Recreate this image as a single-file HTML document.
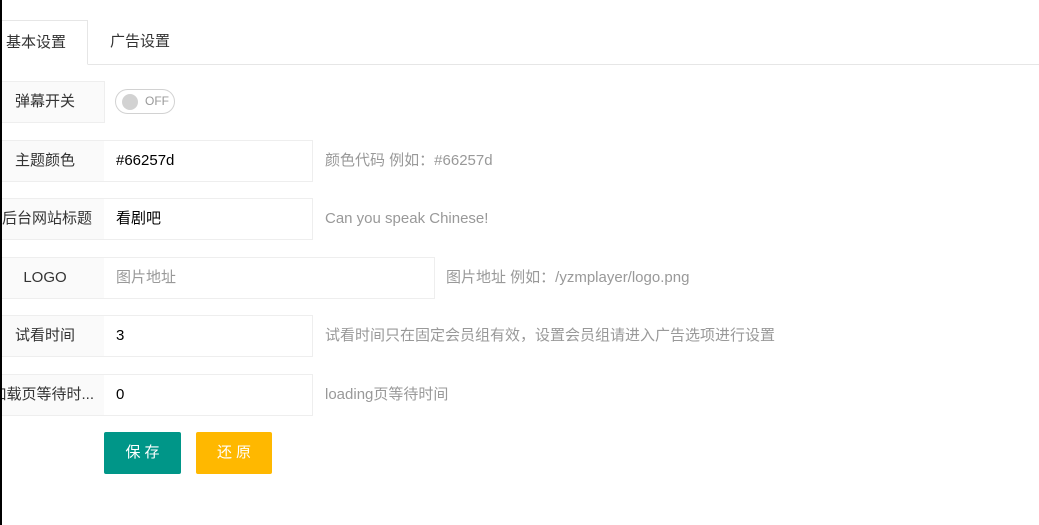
<!DOCTYPE html>
<html><head><meta charset="utf-8"><style>
*{box-sizing:border-box;margin:0;padding:0}
body{width:1039px;height:525px;background:#fff;position:relative;overflow:hidden;font-family:"Liberation Sans","Noto Sans CJK SC",sans-serif;font-size:15px;color:#333}
.lb{position:absolute;left:0;width:2px;top:0;height:525px;background:#000;z-index:5}
.tabline{position:absolute;left:0;top:64px;width:1039px;height:1px;background:#e6e6e6}
.tab1{position:absolute;left:-10px;top:20px;width:98px;height:45px;background:#fff;border:1px solid #e6e6e6;border-bottom-color:#fff;padding-left:15px;line-height:43px;color:#333}
.tab2{position:absolute;left:110px;top:20px;line-height:43px}
.label{position:absolute;left:-15px;width:120px;height:42px;background:#fafafa;border:1px solid #eee;line-height:40px;text-align:center;white-space:nowrap;overflow:hidden;text-overflow:ellipsis;padding:0 4px}
.inp{position:absolute;left:104px;height:42px;border:1px solid #eee;border-left:none;background:#fff;line-height:40px;padding-left:12px;color:#000;width:209px}
.aux{position:absolute;line-height:42px;color:#999}
.sw{position:absolute;left:115px;top:89px;width:60px;height:25px;border:1px solid #d2d2d2;border-radius:13px;background:#fff}
.sw i{position:absolute;left:6px;top:4px;width:16px;height:16px;border-radius:50%;background:#d2d2d2}
.sw span{position:absolute;left:29px;top:0;line-height:23px;font-size:12px;color:#999}
.btn{position:absolute;top:432px;height:42px;line-height:42px;color:#fff;text-align:center;border-radius:2px;letter-spacing:4px;text-indent:4px}
</style></head><body>
<div class="lb"></div>
<div class="tabline"></div>
<div class="tab1">基本设置</div>
<div class="tab2">广告设置</div>

<div class="label" style="top:81px">弹幕开关</div>
<div class="sw"><i></i><span>OFF</span></div>

<div class="label" style="top:140px">主题颜色</div>
<div class="inp" style="top:140px">#66257d</div>
<div class="aux" style="left:325px;top:140px">颜色代码 例如：#66257d</div>

<div class="label" style="top:198px;text-align:right;padding-right:12px;text-overflow:clip">后台网站标题</div>
<div class="inp" style="top:198px">看剧吧</div>
<div class="aux" style="left:325px;top:198px">Can you speak Chinese!</div>

<div class="label" style="top:257px">LOGO</div>
<div class="inp" style="top:257px;width:331px;color:#999">图片地址</div>
<div class="aux" style="left:446px;top:257px">图片地址 例如：/yzmplayer/logo.png</div>

<div class="label" style="top:315px">试看时间</div>
<div class="inp" style="top:315px">3</div>
<div class="aux" style="left:325px;top:315px">试看时间只在固定会员组有效，设置会员组请进入广告选项进行设置</div>

<div class="label" style="top:374px;text-align:right;padding-right:10px;text-overflow:clip">加载页等待时...</div>
<div class="inp" style="top:374px">0</div>
<div class="aux" style="left:325px;top:374px">loading页等待时间</div>

<div class="btn" style="left:104px;width:77px;background:#009688">保存</div>
<div class="btn" style="left:196px;width:76px;background:#FFB800">还原</div>
</body></html>
